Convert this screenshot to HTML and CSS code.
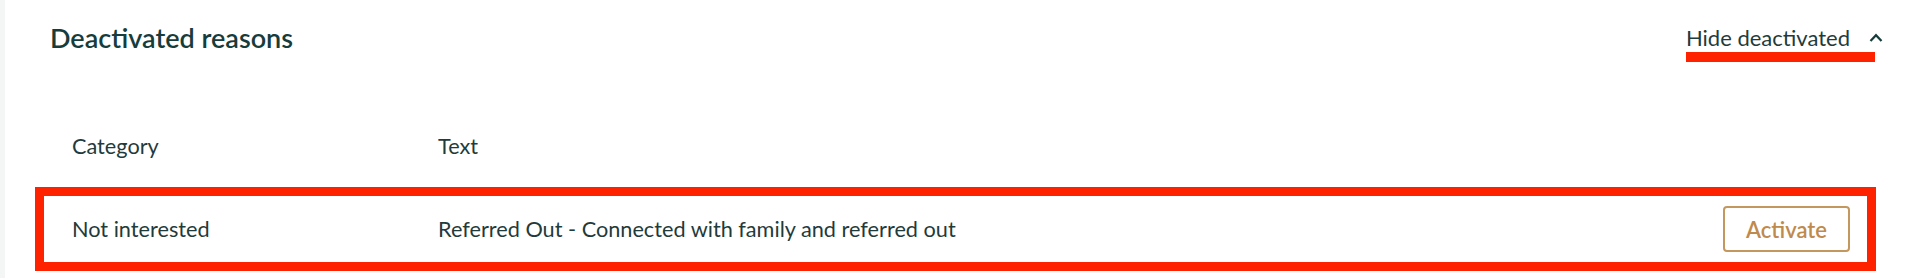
FILE: index.html
```html
<!DOCTYPE html>
<html lang="en">
<head>
  <meta charset="UTF-8" />
  <title>Deactivated reasons</title>
  <link rel="stylesheet" href="styles.css">
</head>
<body>
  <div class="card">
    <div class="card-header">
      <h2>Deactivated reasons</h2>
      <button class="toggle">
        <span class="toggle-label">Hide deactivated</span>
        <svg class="chevron" width="14" height="9" viewBox="0 0 14 9">
          <path d="M1.5 8 L7 2.2 L12.5 8" fill="none" stroke="#173c3c" stroke-width="2.2"/>
        </svg>
      </button>
    </div>

    <div class="table">
      <div class="thead">
        <div class="col-cat">Category</div>
        <div class="col-text">Text</div>
      </div>
      <div class="row highlight">
        <div class="col-cat">Not interested</div>
        <div class="col-text">Referred Out - Connected with family and referred out</div>
        <button class="activate">Activate</button>
      </div>
    </div>
  </div>
</body>
</html>
```

FILE: styles.css
```css
body {
  margin: 0;
  background: #f4f5f5;
  font-family: Lato, "Open Sans", sans-serif;
  color: #1f3b3b;
}
.card {
  background: #ffffff;
  margin-left: 5px;
  height: 278px;
}
.card-header {
  display: flex;
  justify-content: space-between;
  align-items: center;
  padding: 15px 37px 0 45px;
  height: 60px;
  box-sizing: border-box;
}
h2 {
  margin: 0;
  font-size: 27px;
  font-weight: 600;
  color: #163c3c;
}
.toggle {
  position: relative;
  display: flex;
  align-items: center;
  gap: 19px;
  background: none;
  border: none;
  padding: 0;
  font-family: inherit;
  font-size: 22px;
  color: #1f3b3b;
  cursor: pointer;
}
.toggle::after {
  content: "";
  position: absolute;
  left: 0;
  right: 8px;
  bottom: -11px;
  height: 10px;
  background: #ff2200;
}
.table {
  padding: 0 44px 0 30px;
}
.thead {
  display: flex;
  align-items: center;
  height: 127px;
  box-sizing: border-box;
  padding: 44px 0 0 37px;
  font-size: 21.7px;
}
.col-cat {
  width: 366px;
}
.col-text {
  flex: 1;
}
.row {
  display: flex;
  align-items: center;
  height: 66px;
  padding: 0 17px 0 28px;
  font-size: 21.7px;
}
.highlight {
  border: 9px solid #ff2200;
}
.activate {
  width: 127px;
  height: 46px;
  background: #fff;
  border: 2px solid #c4975f;
  border-radius: 4px;
  font-family: inherit;
  font-size: 22px;
  font-weight: 600;
  color: #bf8a4e;
  cursor: pointer;
}
```
